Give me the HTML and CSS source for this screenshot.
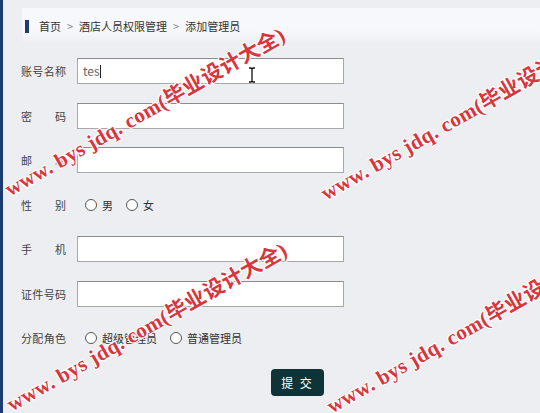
FILE: index.html
```html
<!DOCTYPE html>
<html lang="zh-CN">
<head>
  <meta charset="UTF-8" />
  <title>添加管理员</title>
  <link rel="stylesheet" href="styles.css">
</head>
<body>
  <div class="page">
    <div class="crumb">
      <span class="mark"></span>
      <span>首页</span><span class="sep">&gt;</span>
      <span>酒店人员权限管理</span><span class="sep">&gt;</span>
      <span>添加管理员</span>
    </div>

    <form class="form">
      <div class="row">
        <label class="label">账号名称</label>
        <div class="input">tes<span class="caret"></span></div>
      </div>
      <div class="row">
        <label class="label">密码</label>
        <div class="input"></div>
      </div>
      <div class="row">
        <label class="label">邮箱</label>
        <div class="input"></div>
      </div>
      <div class="row">
        <label class="label">性别</label>
        <div class="radios">
          <span class="radio"></span><span class="opt">男</span>
          <span class="radio"></span><span class="opt">女</span>
        </div>
      </div>
      <div class="row">
        <label class="label">手机</label>
        <div class="input"></div>
      </div>
      <div class="row">
        <label class="label">证件号码</label>
        <div class="input"></div>
      </div>
      <div class="row">
        <label class="label">分配角色</label>
        <div class="radios">
          <span class="radio"></span><span class="opt">超级管理员</span>
          <span class="radio"></span><span class="opt">普通管理员</span>
        </div>
      </div>
      <div class="row">
        <button type="button" class="submit">提 交</button>
      </div>
    </form>

    <!-- mouse pointer -->
    <svg class="ibeam" width="8" height="16" viewBox="0 0 8 16">
      <path d="M1 1h2l1 1 1-1h2M4 2v12M1 15h2l1-1 1 1h2" fill="none" stroke="#111" stroke-width="1.3"/>
    </svg>

    <!-- watermark -->
    <div class="wm wm1">www. bys jdq. com(毕业设计大全)</div>
    <div class="wm wm2">www. bys jdq. com(毕业设计大全)</div>
    <div class="wm wm3">www. bys jdq. com(毕业设计大全)</div>
    <div class="wm wm4">www. bys jdq. com(毕业设计大全)</div>
  </div>
</body>
</html>
```

FILE: styles.css
```css
body {
  margin: 0;
  background: #eceef1;
  font-family: "Noto Sans CJK SC", "Noto Sans", sans-serif;
  color: #333;
  overflow: hidden;
}

.page {
  position: relative;
  height: 413px;
  border-left: 3px solid #1f3b73;
  overflow: hidden;
}

.crumb {
  display: flex;
  align-items: center;
  margin: 8px 0 0 19px;
  height: 36px;
  padding-left: 3px;
  font-size: 11px;
  background: linear-gradient(#f6f8fb 60%, #eceef1);
}

.crumb .mark {
  width: 4px;
  height: 13px;
  background: #1f3b73;
  margin-right: 10px;
}

.crumb .sep {
  color: #888;
  margin: 0 6px;
}

.form {
  padding: 5px 0 0 18px;
}

.row {
  display: flex;
  align-items: center;
  height: 44.5px;
}

.label {
  width: 45px;
  font-size: 11px;
  text-align: justify;
  text-align-last: justify;
  color: #444;
}

.input {
  box-sizing: border-box;
  width: 267px;
  height: 26px;
  margin-left: 11px;
  border: 1px solid #a8a8a8;
  border-top-color: #8c8c8c;
  background: #fff;
  font-size: 12px;
  line-height: 24px;
  padding-left: 5px;
  color: #666;
}

.caret {
  display: inline-block;
  width: 1px;
  height: 13px;
  background: #222;
  vertical-align: -2px;
}

.radios {
  display: flex;
  align-items: center;
  margin-left: 19px;
  font-size: 11px;
}

.radio {
  box-sizing: border-box;
  width: 12px;
  height: 12px;
  border: 1px solid #555;
  border-radius: 50%;
  background: #fff;
  margin-right: 5px;
}

.opt {
  margin-right: 13px;
}

.submit {
  margin-left: 250px;
  width: 53px;
  height: 27px;
  border: none;
  border-radius: 4px;
  background: #0e3437;
  color: #fff;
  font-family: inherit;
  font-size: 12px;
  letter-spacing: 2px;
  cursor: pointer;
}

.ibeam {
  position: absolute;
  left: 245px;
  top: 67px;
}

.wm {
  position: absolute;
  white-space: nowrap;
  font-family: "Liberation Serif", "Noto Sans CJK SC", serif;
  font-weight: bold;
  font-size: 21px;
  letter-spacing: 0.4px;
  line-height: 26px;
  color: #d8353d;
  text-shadow: 1px 1px 0 #fff, -1px -1px 0 #fff, 1px -1px 0 #fff, -1px 1px 0 #fff;
  transform-origin: 0 100%;
  transform: rotate(-29.6deg);
  pointer-events: none;
}

.wm1 { left: 10px;  top: 176px; }
.wm2 { left: 326px; top: 180px; }
.wm3 { left: 12px;  top: 391px; }
.wm4 { left: 332px; top: 393px; }
```
